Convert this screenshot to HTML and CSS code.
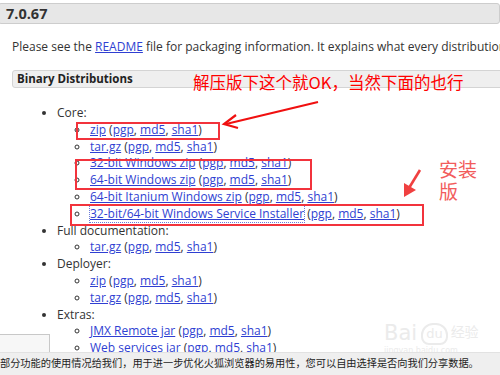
FILE: index.html
```html
<!DOCTYPE html>
<html>
	<head>
		<meta charset="utf-8"/>
		<title>Tomcat 7.0.67</title>
		<link rel="stylesheet" href="styles.css">
	</head>
	<body>
		<div class="version">7.0.67</div>
		<p class="intro">Please see the <a href="#">README</a> file for packaging information. It explains what every distribution</p>
		<div class="section">Binary Distributions</div>
		<ul class="dist">
			<li>Core:
				<ul>
					<li><a href="#">zip</a> (<a href="#">pgp</a>, <a href="#">md5</a>, <a href="#">sha1</a>)</li>
					<li><a href="#">tar.gz</a> (<a href="#">pgp</a>, <a href="#">md5</a>, <a href="#">sha1</a>)</li>
					<li><a href="#">32-bit Windows zip</a> (<a href="#">pgp</a>, <a href="#">md5</a>, <a href="#">sha1</a>)</li>
					<li><a href="#">64-bit Windows zip</a> (<a href="#">pgp</a>, <a href="#">md5</a>, <a href="#">sha1</a>)</li>
					<li><a href="#">64-bit Itanium Windows zip</a> (<a href="#">pgp</a>, <a href="#">md5</a>, <a href="#">sha1</a>)</li>
					<li><a href="#" class="focused">32-bit/64-bit Windows Service Installer</a> (<a href="#">pgp</a>, <a href="#">md5</a>, <a href="#">sha1</a>)</li>
				</ul>
			</li>
			<li>Full documentation:
				<ul>
					<li><a href="#">tar.gz</a> (<a href="#">pgp</a>, <a href="#">md5</a>, <a href="#">sha1</a>)</li>
				</ul>
			</li>
			<li>Deployer:
				<ul>
					<li><a href="#">zip</a> (<a href="#">pgp</a>, <a href="#">md5</a>, <a href="#">sha1</a>)</li>
					<li><a href="#">tar.gz</a> (<a href="#">pgp</a>, <a href="#">md5</a>, <a href="#">sha1</a>)</li>
				</ul>
			</li>
			<li>Extras:
				<ul>
					<li><a href="#">JMX Remote jar</a> (<a href="#">pgp</a>, <a href="#">md5</a>, <a href="#">sha1</a>)</li>
					<li><a href="#">Web services jar</a> (<a href="#">pgp</a>, <a href="#">md5</a>, <a href="#">sha1</a>)</li>
				</ul>
			</li>
		</ul>

		<!-- annotations drawn over the screenshot -->
		<div class="mark mark-zip"></div>
		<div class="mark mark-win"></div>
		<div class="mark mark-svc"></div>
		<div class="note note-top">解压版下这个就OK，当然下面的也行</div>
		<div class="note note-side">安装<br>版</div>
		<svg class="arrows" width="500" height="375" viewBox="0 0 500 375">
			<path d="M318 102 L226 124" stroke="#f01010" stroke-width="2.2" fill="none"/>
			<path d="M236 115 L224 124 L238 128" stroke="#f01010" stroke-width="2.2" fill="none"/>
			<path d="M420 170 L409 188" stroke="#f04040" stroke-width="2.6" fill="none"/>
			<path d="M404 197 L404 183 L416 190 Z" fill="#f04040"/>
		</svg>

		<div class="watermark">
			<div class="wm-logo">Bai<span class="wm-du">du</span><span class="wm-cn">经验</span></div>
			<div class="wm-url">jingyan.baidu.com</div>
		</div>

		<div class="findbox"></div>
		<div class="notice">部分功能的使用情况给我们，用于进一步优化火狐浏览器的易用性，您可以自由选择是否向我们分享数据。</div>
	</body>
</html>
```

FILE: styles.css
```css
body {
	font-family: "Open Sans", "Noto Sans", sans-serif;
	font-size: 12px;
	color: #333;
	margin: 0;
	overflow: hidden;
	background: #fff;
}
a {
	color: #2f3fd2;
}
.version {
	margin: 3px 0 0 -2px;
	height: 19px;
	line-height: 19px;
	padding-left: 7px;
	background: #e7e7e7;
	border: 1px solid #cdcdcd;
	border-radius: 3px;
	font-weight: bold;
	font-size: 14.5px;
	color: #333;
}
.intro {
	margin: 14px 0 0 12px;
	line-height: 18px;
	white-space: nowrap;
}
.section {
	margin: 14px -10px 0 12px;
	height: 16px;
	line-height: 16px;
	padding-left: 4px;
	background: #efefef;
	border: 1px solid #d4d4d4;
	border-radius: 3px;
	font-weight: bold;
	font-size: 11.5px;
	color: #222;
}
.dist {
	margin: 17px 0 0;
	padding-left: 57px;
	line-height: 16.8px;
	list-style: disc;
	white-space: nowrap;
}
.dist ul {
	margin: 0;
	padding-left: 33px;
	list-style: circle;
}
.focused {
	outline: 1px dotted #6a7bd8;
}

.mark {
	position: absolute;
	border: 2px solid #f2333c;
}
.mark-zip {
	left: 76px;
	top: 122px;
	width: 140px;
	height: 14px;
}
.mark-win {
	left: 75px;
	top: 159px;
	width: 233px;
	height: 27px;
}
.mark-svc {
	left: 70px;
	top: 204px;
	width: 350px;
	height: 18px;
}
.note {
	position: absolute;
	font-family: "Noto Sans CJK SC", sans-serif;
	white-space: nowrap;
}
.note-top {
	left: 193px;
	top: 69px;
	font-size: 16.5px;
	line-height: 26px;
	color: #f00;
}
.note-side {
	left: 439px;
	top: 158px;
	font-size: 19px;
	line-height: 22px;
	color: #f25c5c;
}
.arrows {
	position: absolute;
	left: 0;
	top: 0;
}
.watermark {
	position: absolute;
	left: 384px;
	top: 318px;
	color: #ebebeb;
	font-family: "DejaVu Sans", sans-serif;
}
.wm-logo {
	font-size: 21px;
	line-height: 26px;
}
.wm-du {
	display: inline-block;
	margin-left: 4px;
	padding: 0 3px;
	font-size: 13px;
	line-height: 18px;
	border: 2px solid #ebebeb;
	border-radius: 12px 12px 8px 8px;
	vertical-align: 2px;
}
.wm-cn {
	font-family: "Noto Sans CJK SC", sans-serif;
	font-size: 14px;
	margin-left: 3px;
	vertical-align: 3px;
}
.wm-url {
	font-size: 8px;
	line-height: 9px;
}
.findbox {
	position: absolute;
	left: -1px;
	top: 334px;
	width: 49px;
	height: 18px;
	background: #f7f7f7;
	border: 1px solid #c8c8c8;
}
.notice {
	position: fixed;
	left: 0;
	right: 0;
	bottom: 0;
	height: 22px;
	line-height: 20px;
	background: #efefef;
	border-top: 1px solid #e2e2e2;
	font-family: "Noto Sans CJK SC", sans-serif;
	font-size: 10.2px;
	color: #1e1e1e;
	white-space: nowrap;
	overflow: hidden;
}
```
